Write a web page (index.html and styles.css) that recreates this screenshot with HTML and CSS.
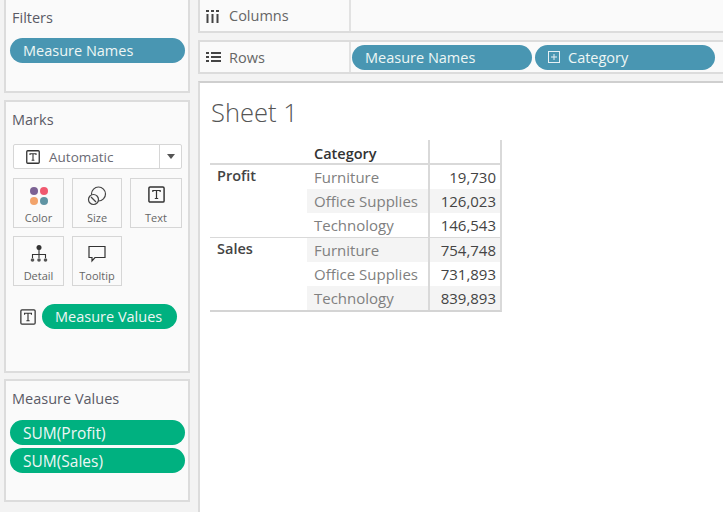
FILE: index.html
```html
<!DOCTYPE html>
<html lang="en">
    <head>
        <meta charset="UTF-8" />
        <title>Sheet 1</title>
        <link rel="stylesheet" href="styles.css">
    </head>
    <body>
        <aside class="side">
            <section class="card filters">
                <h2>Filters</h2>
                <div class="pill blue">Measure Names</div>
            </section>
            <section class="card marks">
                <h2>Marks</h2>
                <div class="mark-select">
                    <span class="mark-select-label">
                        <svg class="t-icon" width="14" height="14" viewBox="0 0 14 14"><rect x="0.75" y="0.75" width="12.5" height="12.5" rx="1" fill="none" stroke="#333" stroke-width="1.3"/><path d="M4 5V3.7h6V5M7 3.7v6.6M5.6 10.3h2.8" fill="none" stroke="#333" stroke-width="1.1"/></svg>
                        Automatic
                    </span>
                    <span class="mark-select-arrow"></span>
                </div>
                <div class="mark-grid">
                    <div class="mark-btn">
                        <svg width="20" height="20" viewBox="0 0 20 20"><circle cx="5" cy="5" r="4" fill="#7b6294"/><circle cx="15" cy="5" r="4" fill="#f0596f"/><circle cx="5" cy="15" r="4" fill="#f2a36b"/><circle cx="15" cy="15" r="4" fill="#5f94a3"/></svg>
                        <span>Color</span>
                    </div>
                    <div class="mark-btn">
                        <svg width="20" height="20" viewBox="0 0 20 20"><circle cx="11.5" cy="8" r="7" fill="none" stroke="#444" stroke-width="1.2"/><circle cx="6.5" cy="13.5" r="5" fill="#fafafa" stroke="#444" stroke-width="1.2"/><path d="M4 11l5 5" stroke="#444" stroke-width="1.2"/></svg>
                        <span>Size</span>
                    </div>
                    <div class="mark-btn">
                        <svg width="17" height="17" viewBox="0 0 14 14"><rect x="0.75" y="0.75" width="12.5" height="12.5" rx="1" fill="none" stroke="#333" stroke-width="1.2"/><path d="M4 5V3.7h6V5M7 3.7v6.6M5.6 10.3h2.8" fill="none" stroke="#333" stroke-width="1"/></svg>
                        <span>Text</span>
                    </div>
                    <div class="mark-btn">
                        <svg width="18" height="20" viewBox="0 0 18 20"><circle cx="9" cy="3.5" r="2.5" fill="#333"/><path d="M9 5v9M2.5 14v-3.5h13V14" fill="none" stroke="#333" stroke-width="1.1"/><circle cx="2.5" cy="16" r="1.8" fill="#555"/><circle cx="9" cy="16" r="1.8" fill="#555"/><circle cx="15.5" cy="16" r="1.8" fill="#555"/></svg>
                        <span>Detail</span>
                    </div>
                    <div class="mark-btn">
                        <svg width="20" height="20" viewBox="0 0 20 20"><path d="M2 2.5h16v11H8l-3 3.5v-3.5H2z" fill="none" stroke="#333" stroke-width="1.2"/></svg>
                        <span>Tooltip</span>
                    </div>
                </div>
                <div class="mark-field">
                    <svg width="16" height="16" viewBox="0 0 14 14"><rect x="0.75" y="0.75" width="12.5" height="12.5" rx="1" fill="none" stroke="#333" stroke-width="1.1"/><path d="M4 5V3.7h6V5M7 3.7v6.6M5.6 10.3h2.8" fill="none" stroke="#333" stroke-width="1"/></svg>
                    <div class="pill green">Measure Values</div>
                </div>
            </section>
            <section class="card values">
                <h2>Measure Values</h2>
                <div class="pill green sum">SUM(Profit)</div>
                <div class="pill green sum">SUM(Sales)</div>
            </section>
        </aside>
        <main class="work">
            <div class="shelf shelf-columns">
                <div class="shelf-name">
                    <svg width="14" height="14" viewBox="0 0 14 14"><path d="M0 1h3v2H0zM5 1h3v2H5zM10 1h3v2h-3zM0.5 5h2v9h-2zM5.5 5h2v9h-2zM10.5 5h2v9h-2z" fill="#444"/></svg>
                    Columns
                </div>
                <div class="shelf-body"></div>
            </div>
            <div class="shelf">
                <div class="shelf-name">
                    <svg width="15" height="12" viewBox="0 0 15 12"><path d="M0 1h3v2H0zM5 1h10v2H5zM0 5h3v2H0zM5 5h10v2H5zM0 9h3v2H0zM5 9h10v2H5z" fill="#444"/></svg>
                    Rows
                </div>
                <div class="shelf-body">
                    <div class="pill blue wide">Measure Names</div>
                    <div class="pill blue wide">
                        <svg class="expand" width="12" height="12" viewBox="0 0 12 12"><rect x="0.5" y="0.5" width="11" height="11" fill="none" stroke="#e6f0f4"/><path d="M3 6h6M6 3v6" stroke="#e6f0f4"/></svg>
                        Category
                    </div>
                </div>
            </div>
            <div class="sheet">
                <h1>Sheet 1</h1>
                <div class="crosstab">
                    <div class="head-row">
                        <div class="col-a"></div>
                        <div class="col-b head-label">Category</div>
                        <div class="col-c"></div>
                    </div>
                    <div class="group">
                        <div class="col-a group-name">Profit</div>
                        <div class="group-rows">
                            <div class="row"><div class="col-b">Furniture</div><div class="col-c">19,730</div></div>
                            <div class="row shade"><div class="col-b">Office Supplies</div><div class="col-c">126,023</div></div>
                            <div class="row"><div class="col-b">Technology</div><div class="col-c">146,543</div></div>
                        </div>
                    </div>
                    <div class="group">
                        <div class="col-a group-name">Sales</div>
                        <div class="group-rows">
                            <div class="row shade"><div class="col-b">Furniture</div><div class="col-c">754,748</div></div>
                            <div class="row"><div class="col-b">Office Supplies</div><div class="col-c">731,893</div></div>
                            <div class="row shade"><div class="col-b">Technology</div><div class="col-c">839,893</div></div>
                        </div>
                    </div>
                </div>
            </div>
        </main>
    </body>
</html>
```

FILE: styles.css
```css
* {
    box-sizing: border-box;
}
html,
body {
    height: 512px;
    overflow: hidden;
}
body {
    display: flex;
    margin: 0;
    background-color: #f3f3f3;
    color: #555;
    font-family: "Open Sans", Arial, sans-serif;
    font-size: 14px;
}
.side {
    display: flex;
    flex-direction: column;
    flex: 0 0 198px;
    padding-left: 4px;
    padding-right: 8px;
}
.card {
    margin-bottom: 7px;
    border: 2px solid #dcdcdc;
    background-color: #fafafa;
    padding: 0 3px 0 4px;
}
.card h2 {
    margin: 0;
    padding-left: 2px;
    color: #5a5a66;
    font-size: 14.5px;
    font-weight: 400;
    line-height: 20px;
}
.filters {
    height: 93px;
    margin-bottom: 7px;
    border-top: 0;
    padding-top: 8px;
}
.filters h2 {
    margin-bottom: 10px;
}
.marks {
    height: 273px;
    margin-bottom: 6px;
    padding-top: 8px;
}
.values {
    height: 123px;
    padding-top: 8px;
}
.values h2 {
    margin-bottom: 11px;
}
.pill {
    display: flex;
    align-items: center;
    height: 25px;
    margin-bottom: 3px;
    padding-left: 13px;
    border-radius: 13px;
    color: #eef6f5;
    font-size: 14.5px;
    white-space: nowrap;
}
.sum {
    font-size: 15.5px;
}
.blue {
    background-color: #4996b2;
}
.green {
    background-color: #00b180;
}
.mark-select {
    display: flex;
    height: 25px;
    margin: 14px 3px 9px 3px;
    border: 1px solid #d6d6d6;
    border-radius: 2px;
    background-color: #fff;
}
.mark-select-label {
    display: flex;
    flex: 1;
    align-items: center;
    gap: 9px;
    padding-left: 12px;
    color: #6a6a74;
    font-size: 13.5px;
}
.mark-select-arrow {
    display: flex;
    flex: 0 0 22px;
    align-items: center;
    justify-content: center;
    border-left: 1px solid #d6d6d6;
}
.mark-select-arrow::after {
    content: "";
    border-top: 5px solid #555;
    border-left: 4px solid transparent;
    border-right: 4px solid transparent;
}
.mark-grid {
    display: grid;
    grid-template-columns: 51px 50px 52px;
    grid-auto-rows: 50px;
    gap: 8px;
    margin-left: 3px;
}
.mark-btn {
    display: flex;
    flex-direction: column;
    align-items: center;
    justify-content: space-between;
    border: 1px solid #d6d6d6;
    padding: 7px 0 2px;
    color: #666;
    font-size: 11px;
}
.mark-field {
    display: flex;
    align-items: center;
    gap: 6px;
    margin: 18px 0 0 10px;
}
.mark-field .pill {
    width: 135px;
    margin: 0;
}
.work {
    display: flex;
    flex: 1;
    flex-direction: column;
    min-width: 0;
}
.shelf {
    display: flex;
    flex: 0 0 34px;
    margin-bottom: 7px;
    border: 2px solid #dcdcdc;
    border-right: 0;
    background-color: #fafafa;
}
.shelf-columns {
    flex-basis: 33px;
    border-top: 0;
}
.shelf-columns .shelf-name {
    gap: 9px;
}
.shelf-name {
    display: flex;
    flex: 0 0 151px;
    align-items: center;
    gap: 8px;
    padding-left: 6px;
    border-right: 2px solid #e2e2e2;
    color: #666;
    font-size: 14.5px;
}
.shelf-body {
    display: flex;
    flex: 1;
    align-items: center;
    gap: 3px;
    padding-left: 1px;
}
.wide {
    flex: 0 0 180px;
    margin: 0;
}
.expand {
    margin-right: 8px;
}
.sheet {
    flex: 1;
    border-top: 2px solid #cfcfcf;
    border-left: 2px solid #dcdcdc;
    background-color: #fff;
    padding: 14px 0 0 10px;
}
.sheet h1 {
    margin: 0 0 13px 1px;
    color: #555;
    font-size: 25.5px;
    font-weight: 300;
    line-height: 30px;
}
.crosstab {
    width: 292px;
    border-right: 2px solid #d9d9d9;
    border-bottom: 2px solid #d4d4d4;
    font-size: 15px;
}
.head-row,
.row,
.group {
    display: flex;
}
.head-row {
    height: 25px;
    border-bottom: 2px solid #d9d9d9;
}
.head-label {
    color: #333;
    font-size: 14.5px;
    font-weight: 600;
    line-height: 28px;
}
.group + .group {
    box-shadow: 0 -1px 0 #d9d9d9;
}
.col-a {
    flex: 0 0 97px;
}
.col-b {
    flex: 0 0 121px;
    padding-left: 7px;
}
.col-c {
    flex: 0 0 72px;
    border-left: 2px solid #d9d9d9;
    padding-right: 4px;
    color: #444;
    text-align: right;
}
.group-name {
    padding-left: 7px;
    color: #444;
    font-size: 14.5px;
    font-weight: 600;
    line-height: 22px;
}
.group-rows {
    flex: 1;
}
.row {
    height: 24.2px;
    color: #808080;
    line-height: 24px;
}
.shade {
    background-color: #f4f4f4;
}
```
